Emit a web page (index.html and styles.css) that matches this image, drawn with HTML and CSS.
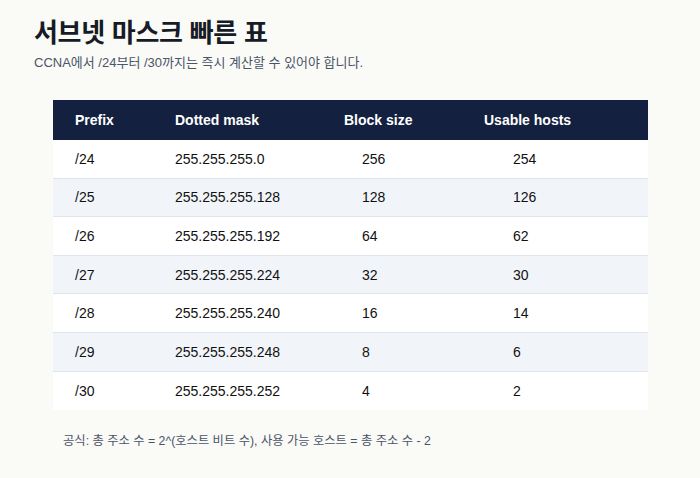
FILE: index.html
```html
<!DOCTYPE html>
<html lang="ko">
<head>
<meta charset="utf-8">
<link rel="stylesheet" href="styles.css">
</head>
<body>
<div class="page">
  <h1 class="title">서브넷 마스크 빠른 표</h1>
  <p class="subtitle">CCNA에서 /24부터 /30까지는 즉시 계산할 수 있어야 합니다.</p>
  <div class="table">
    <div class="row head">
      <div class="c1">Prefix</div><div class="c2">Dotted mask</div><div class="c3">Block size</div><div class="c4">Usable hosts</div>
    </div>
    <div class="row"><div class="c1">/24</div><div class="c2">255.255.255.0</div><div class="c3">256</div><div class="c4">254</div></div>
    <div class="row alt"><div class="c1">/25</div><div class="c2">255.255.255.128</div><div class="c3">128</div><div class="c4">126</div></div>
    <div class="row"><div class="c1">/26</div><div class="c2">255.255.255.192</div><div class="c3">64</div><div class="c4">62</div></div>
    <div class="row alt"><div class="c1">/27</div><div class="c2">255.255.255.224</div><div class="c3">32</div><div class="c4">30</div></div>
    <div class="row"><div class="c1">/28</div><div class="c2">255.255.255.240</div><div class="c3">16</div><div class="c4">14</div></div>
    <div class="row alt"><div class="c1">/29</div><div class="c2">255.255.255.248</div><div class="c3">8</div><div class="c4">6</div></div>
    <div class="row last"><div class="c1">/30</div><div class="c2">255.255.255.252</div><div class="c3">4</div><div class="c4">2</div></div>
  </div>
  <p class="note">공식: 총 주소 수 = 2^(호스트 비트 수), 사용 가능 호스트 = 총 주소 수 - 2</p>
</div>
</body>
</html>
```
FILE: styles.css
```css
html, body {
  margin: 0;
  padding: 0;
  background: #fafaf7;
}
.page {
  padding: 15px 52px 0 34px;
  font-family: "Liberation Sans", "Noto Sans CJK KR", sans-serif;
}
.title {
  margin: 0;
  font-family: "Noto Sans CJK KR", sans-serif;
  font-size: 26px;
  line-height: 32px;
  font-weight: 700;
  color: #161b26;
  letter-spacing: -0.3px;
}
.subtitle {
  margin: 7px 0 0 0;
  font-size: 13px;
  line-height: 18px;
  color: #4a5568;
  font-family: "Liberation Sans", "Noto Sans CJK KR", sans-serif;
}
.table {
  margin: 28px 0 0 19px;
  background: #ffffff;
}
.row {
  display: grid;
  grid-template-columns: 100px 168px 141px 1fr;
  height: 38.6px;
  align-items: center;
  border-bottom: 1px solid #dfe5ec;
  box-sizing: border-box;
  font-size: 14px;
  color: #111111;
}
.row.alt { background: #f1f5f9; }
.row.last { border-bottom: none; }
.row.head {
  height: 40px;
  background: #142040;
  color: #ffffff;
  font-weight: 700;
  border-bottom: none;
}
.c1, .c2 { padding-left: 22px; }
.c3 { padding-left: 41px; }
.c4 { padding-left: 51px; }
.head .c3 { padding-left: 23px; }
.head .c4 { padding-left: 22px; }
.note {
  margin: 23px 0 0 29px;
  font-size: 12.3px;
  line-height: 16px;
  color: #4a5568;
}
```
